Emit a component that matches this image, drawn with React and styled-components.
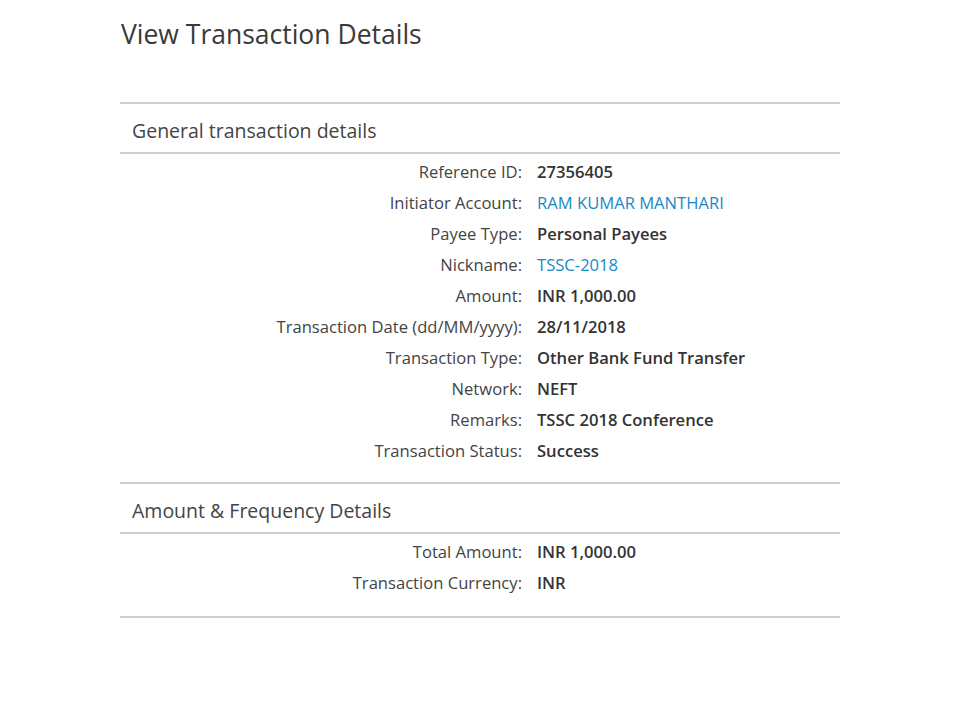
import React from "react";
import styled, { createGlobalStyle } from "styled-components";

const Global = createGlobalStyle`
  html, body { margin: 0; padding: 0; background: #fff; }
  body { font-family: "Open Sans", "Noto Sans", sans-serif; color: #333; }
`;

const Page = styled.div`
  width: 720px;
  margin: 0 0 0 120px;
  padding-top: 14px;
`;

const Title = styled.h1`
  margin: 0 0 0 1px;
  font-size: 26.5px;
  font-weight: 400;
  line-height: 40px;
  color: #3a3a3a;
`;

const Sections = styled.div`
  margin-top: 48px;
  border-bottom: 2px solid #cfcfcf;
`;

const Section = styled.section`
  border-top: 2px solid #cfcfcf;
`;

const SectionHeader = styled.h2`
  margin: 0;
  height: 50px;
  box-sizing: border-box;
  padding: 14px 0 0 12px;
  font-size: 19.5px;
  line-height: 26px;
  font-weight: 400;
  color: #444;
  border-bottom: 2px solid #cfcfcf;
`;

const Rows = styled.dl`
  margin: 0;
  padding: 2px 0 ${(p) => p.$bottom}px;
  display: grid;
  grid-template-columns: 402px 1fr;
  column-gap: 15px;
  grid-auto-rows: 31px;
  align-items: center;
`;

const Label = styled.dt`
  margin: 0;
  text-align: right;
  font-size: 16.6px;
  color: #444;
`;

const Value = styled.dd`
  margin: 0;
  font-size: 16.6px;
  font-weight: ${(p) => (p.$link ? 400 : 600)};
  color: ${(p) => (p.$link ? "#1b88c6" : "#333")};
`;

const general = [
  ["Reference ID:", "27356405"],
  ["Initiator Account:", "RAM KUMAR MANTHARI", true],
  ["Payee Type:", "Personal Payees"],
  ["Nickname:", "TSSC-2018", true],
  ["Amount:", "INR 1,000.00"],
  ["Transaction Date (dd/MM/yyyy):", "28/11/2018"],
  ["Transaction Type:", "Other Bank Fund Transfer"],
  ["Network:", "NEFT"],
  ["Remarks:", "TSSC 2018 Conference"],
  ["Transaction Status:", "Success"],
];

const amount = [
  ["Total Amount:", "INR 1,000.00"],
  ["Transaction Currency:", "INR"],
];

function DetailSection({ title, rows, bottom }) {
  return (
    <Section>
      <SectionHeader>{title}</SectionHeader>
      <Rows $bottom={bottom}>
        {rows.map(([l, v, link]) => (
          <React.Fragment key={l}>
            <Label>{l}</Label>
            <Value $link={link}>{v}</Value>
          </React.Fragment>
        ))}
      </Rows>
    </Section>
  );
}

export default function App() {
  return (
    <>
      <Global />
      <Page>
        <Title>View Transaction Details</Title>
        <Sections>
          <DetailSection title="General transaction details" rows={general} bottom={16} />
          <DetailSection title="Amount & Frequency Details" rows={amount} bottom={18} />
        </Sections>
      </Page>
    </>
  );
}
